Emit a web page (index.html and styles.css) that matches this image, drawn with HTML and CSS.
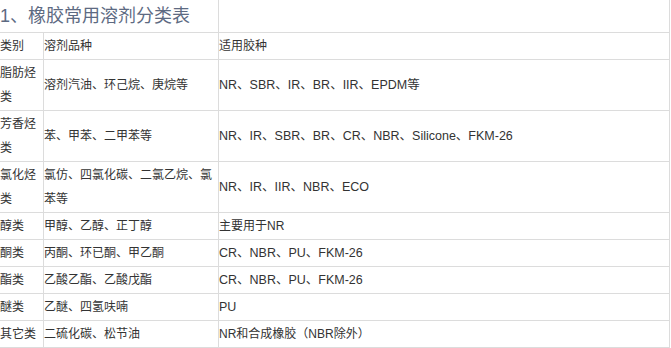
FILE: index.html
```html
<!DOCTYPE html>
<html>
<head>
<meta charset="utf-8">
<link rel="stylesheet" href="styles.css">
</head>
<body>
<table class="solvents">
  <colgroup>
    <col class="c1">
    <col class="c2">
    <col class="c3">
  </colgroup>
  <tr class="title-row">
    <td colspan="2" class="title">1、橡胶常用溶剂分类表</td>
    <td></td>
  </tr>
  <tr class="r1"><td>类别</td><td>溶剂品种</td><td>适用胶种</td></tr>
  <tr class="r2"><td>脂肪烃类</td><td>溶剂汽油、环己烷、庚烷等</td><td class="en">NR、SBR、IR、BR、IIR、EPDM等</td></tr>
  <tr class="r2"><td>芳香烃类</td><td>苯、甲苯、二甲苯等</td><td class="en">NR、IR、SBR、BR、CR、NBR、Silicone、FKM-26</td></tr>
  <tr class="r2"><td>氯化烃类</td><td>氯仿、四氯化碳、二氯乙烷、氯苯等</td><td class="en">NR、IR、IIR、NBR、ECO</td></tr>
  <tr class="r1"><td>醇类</td><td>甲醇、乙醇、正丁醇</td><td>主要用于NR</td></tr>
  <tr class="r1"><td>酮类</td><td>丙酮、环已酮、甲乙酮</td><td class="en">CR、NBR、PU、FKM-26</td></tr>
  <tr class="r1"><td>酯类</td><td>乙酸乙酯、乙酸戊酯</td><td class="en">CR、NBR、PU、FKM-26</td></tr>
  <tr class="r1"><td>醚类</td><td>乙醚、四氢呋喃</td><td class="en">PU</td></tr>
  <tr class="r1"><td>其它类</td><td>二硫化碳、松节油</td><td>NR和合成橡胶（NBR除外）</td></tr>
</table>
</body>
</html>
```
FILE: styles.css
```css
html, body {
  margin: 0;
  padding: 0;
  background: #fff;
  overflow: hidden;
}
body {
  font-family: "Liberation Sans", "Noto Sans CJK SC", sans-serif;
  font-size: 12px;
  color: #333;
}
.solvents {
  border-collapse: collapse;
  margin: -1px 0 0 -1px;
  width: 671px;
  table-layout: fixed;
}
.c1 { width: 44px; }
.c2 { width: 175px; }
.c3 { width: 451px; }
.solvents td {
  border: 1px solid #dcdcdc;
  padding: 1px 0 1px 0;
  line-height: 24px;
  vertical-align: middle;
  word-break: break-all;
}
.title-row td {
  height: 32px;
  padding: 0;
}
.title {
  font-size: 18px;
  color: #5d6a82;
  padding-left: 1px;
}
.en {
  font-size: 12.5px;
}
```
